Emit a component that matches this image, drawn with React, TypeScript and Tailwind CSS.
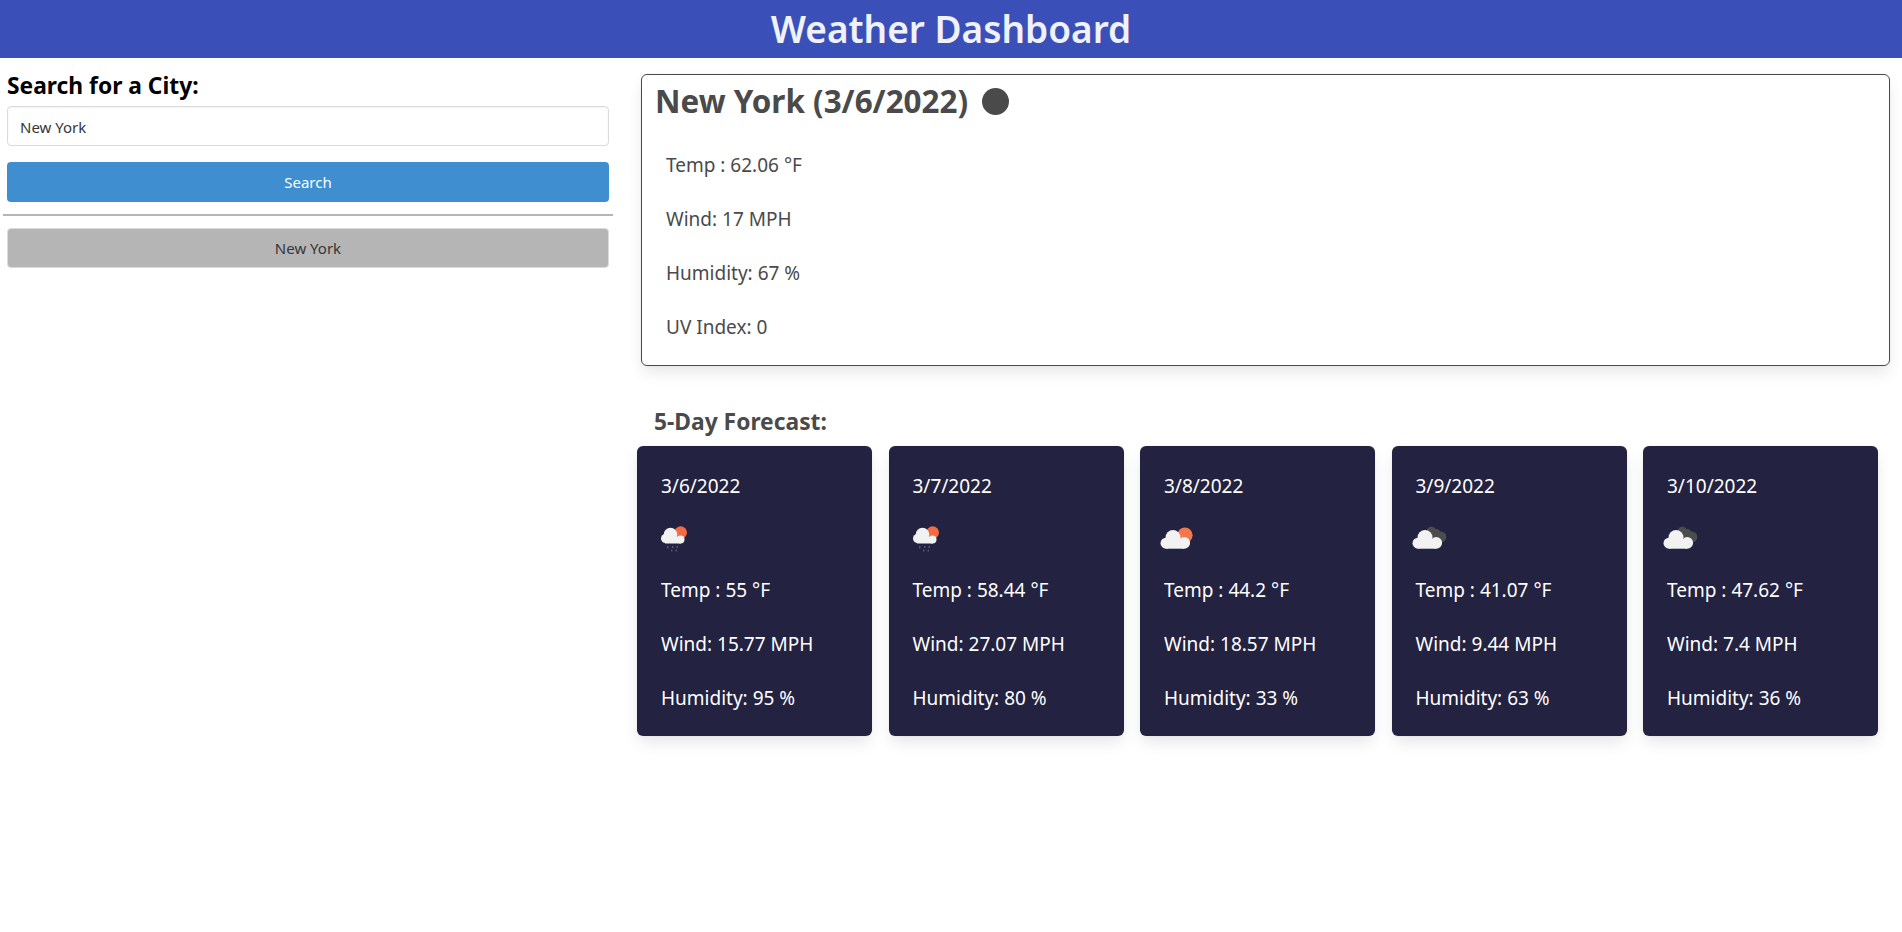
const forecast = [
  { date: "3/6/2022", icon: "rain", temp: "55", wind: "15.77", humidity: "95" },
  { date: "3/7/2022", icon: "rain", temp: "58.44", wind: "27.07", humidity: "80" },
  { date: "3/8/2022", icon: "sun", temp: "44.2", wind: "18.57", humidity: "33" },
  { date: "3/9/2022", icon: "dark", temp: "41.07", wind: "9.44", humidity: "63" },
  { date: "3/10/2022", icon: "dark", temp: "47.62", wind: "7.4", humidity: "36" },
];

function WeatherIcon({ kind }: { kind: string }) {
  return (
    <svg viewBox="0 0 50 50" className="ml-[-5px] h-[50px] w-[50px]">
      {kind === "rain" && (
        <g>
          <circle cx="24.7" cy="17.6" r="6.3" fill="#f26b43" />
          <g fill="#f2f2f2">
            <circle cx="14.5" cy="19.5" r="6.8" />
            <circle cx="9.5" cy="23.5" r="4.5" />
            <circle cx="24.5" cy="24.5" r="4" />
            <rect x="9" y="22" width="16" height="6.5" />
          </g>
          <g fill="#55556a">
            <rect x="11" y="31" width="1.5" height="2.5" />
            <rect x="16" y="31" width="1.5" height="2" />
            <rect x="20.5" y="31" width="1.5" height="2" />
            <rect x="15" y="34.5" width="1.5" height="2" />
            <rect x="19.5" y="34.5" width="1.5" height="2" />
          </g>
        </g>
      )}
      {kind === "sun" && <circle cx="25.9" cy="20.2" r="7.7" fill="#f2784b" />}
      {kind === "dark" && (
        <g fill="#4d4d4d">
          <circle cx="20.4" cy="16.4" r="4.7" />
          <circle cx="25" cy="19" r="5" />
          <circle cx="30" cy="22" r="5.4" />
          <circle cx="27" cy="24" r="3.7" />
        </g>
      )}
      {kind !== "rain" && (
        <g fill="#f2f2f2">
          <circle cx="14" cy="22.5" r="7.5" />
          <circle cx="7" cy="28.2" r="5.5" />
          <circle cx="25.2" cy="27.8" r="5.9" />
          <rect x="7" y="26" width="18" height="7.7" />
        </g>
      )}
    </svg>
  );
}

export default function App() {
  return (
    <div className="min-h-[932px] bg-white font-['Noto_Sans',sans-serif] text-[#4a4a4a]">
      <header className="h-[58px] bg-[#3a50b8] text-center text-[37px] leading-[58px] font-semibold text-[#f0f2fb]">
        Weather Dashboard
      </header>

      <div className="flex">
        <aside className="w-[616px] shrink-0 px-[3px]">
          <h2 className="mt-[14px] ml-[4px] text-[22.8px] leading-[28px] font-bold text-black">Search for a City:</h2>
          <input
            readOnly
            value="New York"
            className="mx-[4px] mt-[6px] block h-[40px] w-[602px] rounded border border-[#dbdbdb] px-3 pt-px text-[15px] text-[#363636] shadow-[inset_0_1px_2px_rgba(10,10,10,0.05)]"
          />
          <button className="mx-[4px] mt-[16px] block h-[40px] w-[602px] rounded bg-[#3e8ed0] text-[15px] text-white">
            Search
          </button>
          <hr className="mt-[12px] border-t-2 border-[#b5b5b5]" />
          <button className="mx-[4px] mt-[12px] block h-[40px] w-[602px] rounded border border-[#dbdbdb] bg-[#b5b5b5] text-[15px] text-[#363636]">
            New York
          </button>
        </aside>

        <main className="min-w-0 flex-1">
          <section className="mt-[16px] mr-[12px] ml-[25px] h-[292px] rounded-md border border-[#4a4a4a] bg-white pt-[4px] pl-[13px] shadow-[0_8px_16px_-2px_rgba(10,10,10,0.1),0_0_0_1px_rgba(10,10,10,0.02)]">
            <div className="flex h-[44px] items-center">
              <h2 className="text-[31.4px] leading-[44px] font-bold">New York (3/6/2022)</h2>
              <span className="ml-[14px] h-[27px] w-[27px] rounded-full bg-[#4a4a4a]" />
            </div>
            <div className="mt-[15px] pl-[11px] text-[19px]">
              <p className="py-[13px] leading-[28px]">Temp : 62.06 °F</p>
              <p className="py-[13px] leading-[28px]">Wind: 17 MPH</p>
              <p className="py-[13px] leading-[28px]">Humidity: 67 %</p>
              <p className="py-[13px] leading-[28px]">UV Index: 0</p>
            </div>
          </section>

          <h3 className="mt-[41px] ml-[38px] text-[22.8px] leading-[30px] font-bold">5-Day Forecast:</h3>

          <div className="mt-[9px] mr-[24px] ml-[21px] flex gap-[16.5px]">
            {forecast.map((day) => (
              <article
                key={day.date}
                className="h-[290px] flex-1 rounded-md bg-[#232240] pt-[26px] pl-[24px] text-[19px] text-white shadow-[0_8px_16px_-2px_rgba(10,10,10,0.1),0_0_0_1px_rgba(10,10,10,0.02)]"
              >
                <p className="leading-[28px]">{day.date}</p>
                <div className="mt-[15px] h-[50px]">
                  <WeatherIcon kind={day.icon} />
                </div>
                <p className="mt-[11px] leading-[28px]">Temp : {day.temp} °F</p>
                <p className="mt-[26px] leading-[28px]">Wind: {day.wind} MPH</p>
                <p className="mt-[26px] leading-[28px]">Humidity: {day.humidity} %</p>
              </article>
            ))}
          </div>
        </main>
      </div>
    </div>
  );
}
